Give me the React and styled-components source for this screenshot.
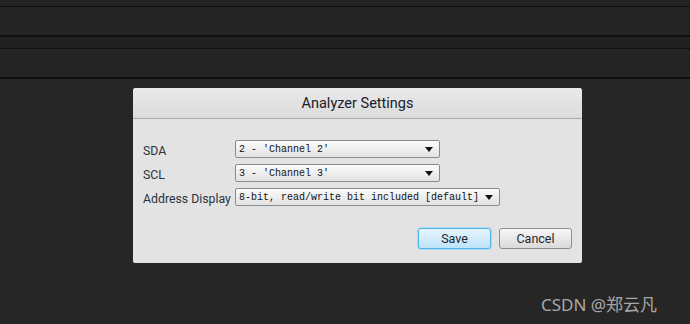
import React from 'react';
import styled, { createGlobalStyle } from 'styled-components';

const Global = createGlobalStyle`
  html, body {
    margin: 0;
    padding: 0;
    background: #262626;
  }
  #root {
    position: relative;
    width: 690px;
    height: 324px;
    overflow: hidden;
  }
`;

const Page = styled.div`
  display: flex;
  flex-direction: column;
  height: 324px;
  background: #262626;
`;

const Band = styled.div`
  height: ${({ h }) => h}px;
  background: ${({ bg }) => bg || '#242424'};
  border-bottom: ${({ line }) => line || 1}px solid #0f0f0f;
  flex-shrink: 0;
`;

const Stage = styled.div`
  padding: 9px 0 0 133px;
`;

const Dialog = styled.div`
  width: 449px;
  height: 175px;
  background: #e3e3e3;
  border-radius: 3px 3px 2px 2px;
  display: flex;
  flex-direction: column;
  font-family: Roboto, "Liberation Sans", sans-serif;
`;

const TitleBar = styled.div`
  height: 29px;
  border-bottom: 1px solid #a9a9a9;
  border-radius: 3px 3px 0 0;
  background: linear-gradient(#e9e9e9, #dcdcdc);
  display: flex;
  align-items: center;
  justify-content: center;
  padding-top: 1px;
  font-size: 14.5px;
  font-weight: 400;
  color: #1a2029;
`;

const Body = styled.div`
  padding: 21px 10px 0 10px;
  display: grid;
  grid-template-columns: 92px auto;
  grid-auto-rows: 18px;
  row-gap: 6px;
  align-items: center;
`;

const Label = styled.div`
  font-size: 12.3px;
  color: #2a3342;
  line-height: 18px;
  padding-top: 2px;
  height: 18px;
  box-sizing: border-box;
`;

const Select = styled.div`
  width: ${({ w }) => w}px;
  height: 18px;
  box-sizing: border-box;
  border: 1px solid #8a8a8a;
  border-radius: 2px;
  background: linear-gradient(#fbfbfb, #e2e2e2);
  display: flex;
  align-items: center;
  justify-content: space-between;
  padding: 0 6px 0 3px;
  font-family: "Liberation Mono", "DejaVu Sans Mono", monospace;
  font-size: 10px;
  color: #111;
`;

const Arrow = styled.span`
  width: 0;
  height: 0;
  border-left: 4px solid transparent;
  border-right: 4px solid transparent;
  border-top: 5px solid #111;
`;

const Actions = styled.div`
  margin-top: 22px;
  padding-right: 10px;
  display: flex;
  justify-content: flex-end;
  gap: 8px;
`;

const Button = styled.button`
  width: 73px;
  height: 21px;
  box-sizing: border-box;
  border-radius: 3px;
  font-family: Roboto, "Liberation Sans", sans-serif;
  font-size: 12.5px;
  color: #1e2530;
  padding: 0;
  border: 1px solid ${({ primary }) => (primary ? '#4fb0e6' : '#8d8d8d')};
  background: ${({ primary }) =>
    primary ? 'linear-gradient(#e6f5fe, #bfe3f9)' : 'linear-gradient(#f7f7f7, #dadada)'};
  box-shadow: ${({ primary }) => (primary ? '0 0 0 1px #a9dcf7' : 'none')};
`;

const Watermark = styled.div`
  position: absolute;
  left: 541px;
  top: 291px;
  font-family: "Noto Sans", "Noto Sans CJK SC", sans-serif;
  font-size: 17px;
  color: #a8a8a8;
`;

const rows = [
  { label: 'SDA', value: "2 - 'Channel 2'", w: 205 },
  { label: 'SCL', value: "3 - 'Channel 3'", w: 205 },
  { label: 'Address Display', value: '8-bit, read/write bit included [default]', w: 265 },
];

export default function App() {
  return (
    <Page>
      <Global />
      <Band h={6} bg="#222" />
      <Band h={28} line={2} />
      <Band h={11} bg="#212121" />
      <Band h={28} line={2} />
      <Stage>
        <Dialog>
          <TitleBar>Analyzer Settings</TitleBar>
          <Body>
            {rows.map((r) => (
              <React.Fragment key={r.label}>
                <Label>{r.label}</Label>
                <Select w={r.w}>
                  <span>{r.value}</span>
                  <Arrow />
                </Select>
              </React.Fragment>
            ))}
          </Body>
          <Actions>
            <Button primary>Save</Button>
            <Button>Cancel</Button>
          </Actions>
        </Dialog>
      </Stage>
      <Watermark>CSDN @郑云凡</Watermark>
    </Page>
  );
}
